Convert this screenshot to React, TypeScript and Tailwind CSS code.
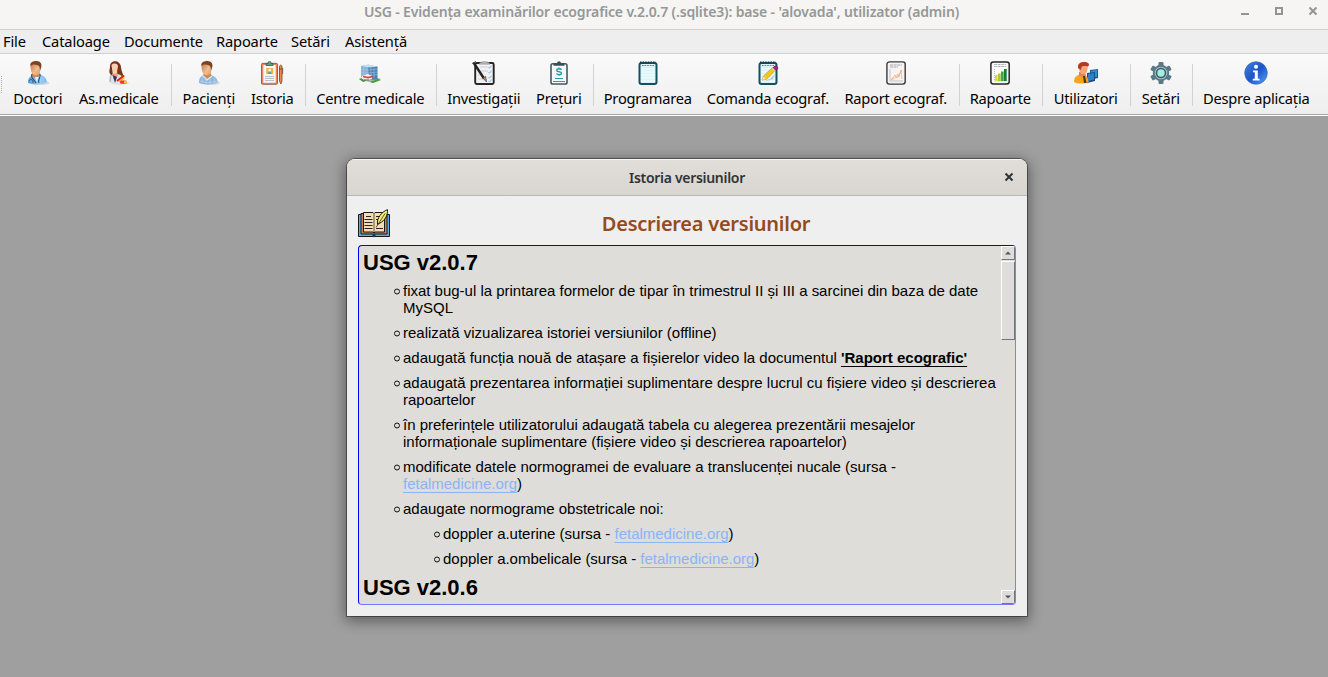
import type { ReactNode } from 'react';

function Svg({ children }: { children: ReactNode }) {
  return (
    <svg viewBox="0 0 24 24" className="block h-6 w-6">
      {children}
    </svg>
  );
}

const Doctor = () => (
  <Svg>
    <defs>
      <linearGradient id="skin" x1="0" x2="1" y1="0" y2="1">
        <stop offset="0" stopColor="#b87345" />
        <stop offset=".6" stopColor="#f3bd90" />
        <stop offset="1" stopColor="#dd9966" />
      </linearGradient>
      <linearGradient id="coat" x1="0" x2="1">
        <stop offset="0" stopColor="#4f9cdf" />
        <stop offset=".6" stopColor="#9ed0f8" />
        <stop offset="1" stopColor="#7fbcf0" />
      </linearGradient>
    </defs>
    <ellipse cx="14" cy="22" rx="9.500" ry="2" fill="#d5d8dc" />
    <path d="M2 22c0-5 2-7 6-8l4-1c5 1 8 3 9 8-4 3-15 3-19 1z" fill="url(#coat)" />
    <path d="M6 10h7l1 4-4 4-4-3z" fill="#cf8a58" />
    <path d="M4.500 4c1-3 9-4 9.500 0v7c-1 4-6 4-8 1-1-2-1.500-4-1.500-8z" fill="url(#skin)" />
    <path d="M4.500 5c-1-4 3-5 6-5 4 0 6 3 4.500 7l-1 3c0-4-1-6-3-6-2-.5-4-1-6.500 1z" fill="#7b4322" />
    <path d="M6 13c-2 4 2 5 4 9M14 13c1 4-3 6-1 9" fill="none" stroke="#27496a" strokeWidth="1.100" />
    <path d="M3 20c1-2 3-2 4 0v2" fill="none" stroke="#36536d" />
    <path d="M9 16l1.500 5 2-5z" fill="#e8f5ff" />
  </Svg>
);

const Nurse = () => (
  <Svg>
    <ellipse cx="13" cy="22" rx="9" ry="1.800" fill="#dcdcdc" />
    <path d="M3 5c0-6 10-7 11 1 0 4 2.500 7 2.500 10l-6.500 1-6-3C1 11 3 9 3 5z" fill="#76351d" />
    <path d="M2.500 15l8-2c5 1 6 4 6 8-5 3-12.500 2-14.500 0 0-3-.5-5 .5-6z" fill="#dfe2ea" />
    <path d="M6 10h4l1 5-3 2-3-3z" fill="#e7a278" />
    <path d="M4.500 4c2-2 5.500-2 6.500 1l-1 6c-1.500 3-4 2-4.500 0z" fill="#fbd0b0" />
    <path d="M5.500 14l2.500 8 2-6z" fill="#34335c" />
    <path d="M4 14l-1 7" stroke="#a4aabb" />
    <path d="M11 20c1-3 3-5 6-6l1 1.500-4 4.500z" fill="#f7c52b" />
    <path d="M10 20l7-5.500" stroke="#d92119" strokeWidth="1.700" />
    <path d="M12 20.500l5-3.500" stroke="#f5a52b" strokeWidth="1.500" />
    <rect x="13" y="19.500" width="7" height="3.300" rx="1.600" fill="#e83c2d" />
    <rect x="17" y="19.500" width="3" height="3.300" rx="1.500" fill="#f8c34c" />
  </Svg>
);

const Patient = () => (
  <Svg>
    <ellipse cx="14" cy="22" rx="9" ry="2" fill="#d5d8dc" />
    <path d="M2 22c0-6 2-7 6-8h6c5 2 6 4 7 7-4 3-15 3-19 1z" fill="#8fb6dc" />
    <path d="M5 17l1 5M9 18v5M13 17v6M17 17l1 5M3 20c5 2 12 2 17 0" stroke="#b8d3ec" strokeWidth=".8" fill="none" />
    <path d="M7 11h6l2 4-4 3-5-3z" fill="#cf8a58" />
    <path d="M4.500 4c1-3 9-4 9.500 0v7c-1 4-6 4-8 1-1-2-1.500-4-1.500-8z" fill="url(#skin)" />
    <path d="M4.500 5c-1-4 3-5 6-5 4 0 6 3 4.500 7l-1 3c0-4-1-6-3-6-2-.5-4-1-6.500 1z" fill="#7b4322" />
    <path d="M6 15l4 4 5-4" fill="none" stroke="#dcebf7" strokeWidth="1.300" />
  </Svg>
);

const History = () => (
  <Svg>
    <rect x="1.500" y="2.300" width="16" height="21" rx="1.300" fill="#ef8558" stroke="#654235" strokeWidth=".7" />
    <rect x="3.300" y="4" width="12.400" height="17.800" fill="#f4f5fa" />
    <path d="M6 4.500V2.500h2c0-3 3-3 3 0h2v2z" fill="#5ba184" stroke="#34594c" strokeWidth=".8" />
    <rect x="6.200" y="7" width="7" height="6" fill="#f5b53f" />
    <circle cx="9.700" cy="9" r="1.300" fill="#fff" />
    <path d="M7.700 13c0-3 4-3 4 0z" fill="#4eaaa0" />
    <path d="M5 15.500h9M5 17.500h9M5 19.500h9" stroke="#b2b9c4" strokeWidth=".9" />
    <path d="M19.500 6c0-2.500 2.500-2.500 2.500 0v14l-1.200 3-1.300-3z" fill="#ec8b4d" stroke="#72442f" strokeWidth=".8" />
    <path d="M19.500 8H22M22.700 7v6" stroke="#72442f" strokeWidth=".8" />
  </Svg>
);

const Hospital = () => (
  <Svg>
    <path d="M1 18l9-4 13 4-8 4z" fill="#a3b7a4" />
    <path d="M1 18l4-1 3 3-3 1zM12 21l8-3 3 1-8 3z" fill="#4b9b36" />
    <path d="M3 5l8-1.500v14L3 16z" fill="#86b2d3" />
    <path d="M10 4l9.500 1.500v13L11 19z" fill="#4a80ae" />
    <path d="M3 5l7-1.500 9.500 2-8 1z" fill="#c8e0f0" />
    <path d="M3 8.500l7.500.5 9-1M3 11.500l7.500.5 9-1M3 14l7.500.5 9-1M13 6.500v12M16 6.500v11M5.500 5.500v10M8.200 5.500v11" stroke="#9ec6e2" strokeWidth=".6" fill="none" />
    <path d="M4 15l6-2 4 2v3l-5 1.500L4 18z" fill="#f1f1f5" />
    <path d="M5 15.500l5 1.200 5-1.200" stroke="#e0442e" strokeWidth="1.700" fill="none" />
    <path d="M6 19h5" stroke="#4d5a69" />
  </Svg>
);

const Investigation = () => (
  <Svg>
    <rect x="3.200" y="2" width="18.500" height="21" rx="1.500" fill="#eff1f5" stroke="#272525" strokeWidth="1.900" />
    <path d="M7 3c1-3 10-3 11 0z" fill="#c9cacd" stroke="#77777a" strokeWidth=".7" />
    <path d="M8 6h8M9 10h7M6 14h4M6 18h9" stroke="#c6c9d0" strokeWidth=".8" />
    <path d="M16.500 6l1 1.200 2-2.500M16.500 11l1 1.200 2-2.500M16.500 16l1 1.200 2-2.500M16.500 20l1 1 2-2.500" stroke="#84abe0" strokeWidth=".9" fill="none" />
    <path d="M1.500 1.500l10.500 16" stroke="#252322" strokeWidth="2.400" />
    <path d="M11 17l3.500 4-.8-5.500z" fill="#ba9558" stroke="#363023" strokeWidth=".6" />
    <path d="M0 2.500l4-2" stroke="#555" strokeWidth="1" />
  </Svg>
);

const Prices = () => (
  <Svg>
    <rect x="4" y="2.700" width="16" height="20.300" rx="1.800" fill="#f8f9f9" stroke="#405a65" strokeWidth="1.600" />
    <path d="M6.500 4.800V2.500h3.500c0-3 4-3 4 0h3.500v2.300z" fill="#34505a" />
    <path d="M14.500 8.800c-.8-1.400-4.700-1.500-4.800.4 0 2.200 4.800.9 4.800 3.100-.1 1.900-4.200 1.800-5 .2" fill="none" stroke="#2b9ba6" strokeWidth="1.500" />
    <path d="M12 6.500v1.300M12 13.700v.8" stroke="#2b9ba6" strokeWidth="1.200" />
    <path d="M8 17.500h8M6 20.500h12" stroke="#2b9ba6" strokeWidth="1.200" />
  </Svg>
);

const NotebookBase = () => (
  <>
    <rect x="3.500" y="2" width="17" height="21" rx="2" fill="#dcf2f6" stroke="#135062" strokeWidth="2" />
    <path d="M4 1.500h16" stroke="#173c4a" strokeWidth="2" strokeDasharray="1.600 1" />
    <path d="M6 4.500h12.500" stroke="#5a7075" strokeWidth=".9" strokeDasharray="1.600 1" />
    <path d="M5 8h14M5 11h14M5 14h14M5 17h14M5 20h14" stroke="#e9fbfd" strokeWidth="1.500" />
  </>
);

const Notebook = () => (
  <Svg>
    <NotebookBase />
  </Svg>
);

const Order = () => (
  <Svg>
    <NotebookBase />
    <path d="M8 21l9-3 2-5-4 4z" fill="#b8c9cc" />
    <path d="M6 19l1.500-4L17 6l2.800 2.800-9.300 9.500z" fill="#f8ca18" stroke="#b08720" strokeWidth=".6" />
    <path d="M6 19l1.500-3.500 2.500 2.500z" fill="#f8e4b8" />
    <path d="M16.300 6.500l2.900 2.900" stroke="#d9dde0" strokeWidth="1.400" />
    <path d="M17.700 6c1.300-2 5-.5 3.800 2l-2 1-2-2z" fill="#c41e76" stroke="#671345" strokeWidth=".8" />
  </Svg>
);

const ReportChart = () => (
  <Svg>
    <rect x="2.900" y=".9" width="18.300" height="22.200" rx="2.500" fill="#f5f3f4" stroke="#3b3739" strokeWidth="1.400" />
    <path d="M6 4h12M6 6h8" stroke="#a5a5aa" strokeWidth="1" strokeDasharray="3 .6" />
    <path d="M6 8v12h13" stroke="#a8b1bd" strokeWidth=".7" fill="none" />
    <path d="M7 19l4-5 2 3 5-8" fill="none" stroke="#f8b468" strokeWidth=".9" />
    <path d="M7 19l4-2 3-4 1 3 2-7 1 9" fill="none" stroke="#f1a097" strokeWidth=".7" />
  </Svg>
);

const Reports = () => (
  <Svg>
    <rect x="2.900" y=".9" width="18.300" height="22.200" rx="2.500" fill="#fbfbfb" stroke="#272727" strokeWidth="1.500" />
    <path d="M6 3.500h12M6 5.500h12" stroke="#aaaaab" strokeWidth=".8" strokeDasharray="3 .6" />
    <path d="M6.500 8v12h12.500" stroke="#8c9297" strokeWidth=".6" strokeDasharray="1 1" fill="none" />
    <path d="M7 14h2.700v6H7z" fill="#e0df2c" />
    <path d="M10 12.500h2.700V20H10z" fill="#a3cd36" />
    <path d="M13 10.500h2.700V20H13z" fill="#3aa845" />
    <path d="M16 8h2.700v12H16z" fill="#168136" />
  </Svg>
);

const Users = () => (
  <Svg>
    <path d="M16 9l8-1v9l-8 2z" fill="#1c5b98" />
    <path d="M17 10l6-.9v6.500l-6 1.400z" fill="#3390d4" />
    <path d="M13 12l8-1v9l-8 2z" fill="#174f86" />
    <path d="M14 13l6-.9v6.500L14 20z" fill="#327fc5" />
    <path d="M0 21c0-5 3-7 7-8 4 0 7.500 3 7.500 8-4 2-11 2-14.500 0z" fill="#f8a619" />
    <path d="M5 11h6l1 4-2 2-5-2z" fill="#e88450" />
    <path d="M9 15l1 7h2.500L11 15z" fill="#4e3522" />
    <path d="M4.500 4c1-3 9.500-3 9.500 1l-1 6c-2 3-6 3-7 0-1-2-1.500-4-1.500-7z" fill="#f4a67b" />
    <path d="M4 7C3.500 2 7 1 10 1c4 0 6 2 4.500 4-2 1-5-1-7 1L7 9z" fill="#b23c20" />
  </Svg>
);

const Gear = () => (
  <Svg>
    <g fill="#587985">
      <rect x="9.500" y="1" width="5" height="22" rx="1" />
      <rect x="9.500" y="1" width="5" height="22" rx="1" transform="rotate(60 12 12)" />
      <rect x="9.500" y="1" width="5" height="22" rx="1" transform="rotate(120 12 12)" />
      <circle cx="12" cy="12" r="8.200" />
    </g>
    <circle cx="12" cy="12" r="5.800" fill="#3d5f6c" stroke="#a4b9c0" strokeWidth="1.100" />
    <circle cx="12" cy="12" r="3.700" fill="#a2efe2" />
  </Svg>
);

const Info = () => (
  <Svg>
    <defs>
      <linearGradient id="info" x1="0" x2="1" y1="0" y2="1">
        <stop offset="0" stopColor="#4a82df" />
        <stop offset=".5" stopColor="#1c54c9" />
        <stop offset="1" stopColor="#52a5f5" />
      </linearGradient>
    </defs>
    <circle cx="12" cy="12" r="11.300" fill="url(#info)" stroke="#3868b8" strokeWidth=".7" />
    <circle cx="12" cy="5.800" r="2" fill="#fff" />
    <path d="M9 9.500h4.800v8.300h1.800v1.700H8.800v-1.700h2v-6.500H9z" fill="#fff" />
  </Svg>
);

const Book = () => (
  <svg viewBox="0 0 32 29" className="block h-[29px] w-8">
    <path d="M.5 5.500h31v22H.5z" fill="#55aee0" stroke="#191919" strokeWidth="1" />
    <path d="M3 4.500h26v20.500H3z" fill="#c98550" stroke="#191919" strokeWidth="1" />
    <path d="M5.500 3.500h9.500l1 1 1-1h9.500V23H17l-1 1-1-1H5.500z" fill="#f3dcb6" stroke="#191919" strokeWidth="1" />
    <path d="M16 5v18" stroke="#8d7a62" strokeWidth="1.400" />
    <path d="M8 7.500h5M6.500 10.500h8M6.500 13.500h8M6.500 16.500h8M6.500 19.500h8M18 7.500h4M18 10.500h2M18 19.500h7" stroke="#292420" strokeWidth="1" />
    <path d="M19.500 15.500C18.500 9 24 2.500 29.500.7c.4 5-2.500 11-7.500 13.300z" fill="#f6ed72" stroke="#171710" strokeWidth="1" />
    <path d="M18 18.500L27 4.500" stroke="#34321a" strokeWidth=".8" />
    <path d="M14.500 25h3v2l-1.500 1.500-1.500-1.500z" fill="#173e51" />
  </svg>
);

type Tool = { label: string; width: string; icon: ReactNode; after?: string };

const tools: Tool[] = [
  { label: 'Doctori', width: 'w-[65px]', icon: <Doctor /> },
  { label: 'As.medicale', width: 'w-[97px]', icon: <Nurse />, after: 'w-[7px]' },
  { label: 'Pacienți', width: 'w-[69px]', icon: <Patient /> },
  { label: 'Istoria', width: 'w-[58px]', icon: <History />, after: 'w-[7px]' },
  { label: 'Centre medicale', width: 'w-[124px]', icon: <Hospital />, after: 'w-[7px]' },
  { label: 'Investigații', width: 'w-[89px]', icon: <Investigation /> },
  { label: 'Prețuri', width: 'w-[61px]', icon: <Prices />, after: 'w-[7px]' },
  { label: 'Programarea', width: 'w-[103px]', icon: <Notebook /> },
  { label: 'Comanda ecograf.', width: 'w-[137px]', icon: <Order /> },
  { label: 'Raport ecograf.', width: 'w-[119px]', icon: <ReportChart />, after: 'w-[7px]' },
  { label: 'Rapoarte', width: 'w-[76px]', icon: <Reports />, after: 'w-[7px]' },
  { label: 'Utilizatori', width: 'w-[81px]', icon: <Users />, after: 'w-[7px]' },
  { label: 'Setări', width: 'w-[55px]', icon: <Gear />, after: 'w-[7px]' },
  { label: 'Despre aplicația', width: 'w-[122px]', icon: <Info /> },
];

const menus = [
  { label: 'File', width: 'w-[39px]' },
  { label: 'Cataloage', width: 'w-[82px]' },
  { label: 'Documente', width: 'w-[92px]' },
  { label: 'Rapoarte', width: 'w-[75px]' },
  { label: 'Setări', width: 'w-[54px]' },
  { label: 'Asistență', width: 'w-[70px]' },
];

function Item({ children }: { children: ReactNode }) {
  return (
    <li className="mb-2 flex">
      <svg viewBox="0 0 10 17" className="-ml-2.5 h-[17px] w-2.5 shrink-0">
        <circle cx="4" cy="9.500" r="2.500" fill="none" stroke="#111" strokeWidth="1" />
      </svg>
      <div>{children}</div>
    </li>
  );
}

const Link = () => (
  <a className="text-[#8ab4f8] underline decoration-1 underline-offset-3">fetalmedicine.org</a>
);

function ScrollButton({ down }: { down?: boolean }) {
  return (
    <div className="flex h-[14px] w-[14px] shrink-0 items-center justify-center border border-t-white border-r-[#77767a] border-b-[#77767a] border-l-white bg-[#deddd9]">
      <svg viewBox="0 0 6 4" className="h-1 w-1.5">
        <path d={down ? 'M0 .5h6l-3 3z' : 'M0 3.500h6l-3-3z'} fill="#555" />
      </svg>
    </div>
  );
}

export default function App() {
  return (
    <div className="flex h-[677px] w-[1328px] flex-col overflow-hidden bg-[#9f9f9f] font-['Noto_Sans',sans-serif] text-black">
      <header className="relative flex h-[29px] shrink-0 items-start justify-center bg-[#f6f5f3]">
        <h1 className="mt-[2px] -ml-[5px] text-[14px] leading-[19px] font-semibold tracking-[-0.15px] whitespace-nowrap text-[#949897]">
          USG - Evidența examinărilor ecografice v.2.0.7 (.sqlite3): base - 'alovada', utilizator (admin)
        </h1>
        <svg viewBox="0 0 80 12" className="absolute top-[5px] right-[8px] h-3 w-20">
          <path d="M1 9h8" stroke="#929595" strokeWidth="2" />
          <path d="M36 3h6v6h-6z" fill="none" stroke="#929595" strokeWidth="2" />
          <path d="M69.500 2.500l7 7M76.500 2.500l-7 7" stroke="#929595" strokeWidth="2" />
        </svg>
      </header>
      <nav className="flex h-[25px] shrink-0 items-center border-t border-b border-t-[#d2d1cd] border-b-[#d0d0d0] bg-[#eeeeee] pb-0.5 pl-[3px] text-[14.67px] leading-5 tracking-[-0.15px]">
        {menus.map((m) => (
          <div key={m.label} className={`${m.width} shrink-0 whitespace-nowrap`}>
            {m.label}
          </div>
        ))}
      </nav>
      <div className="flex h-[62px] shrink-0 border-b border-white bg-[#a8a8a8] pb-px">
        <div className="flex w-full bg-linear-to-b from-[#fafafa] to-[#eeeeee]">
          <div className="mt-[22px] mr-px ml-px h-[17px] w-1 shrink-0 border-l border-dotted border-[#aaa]" />
          {tools.map((t) => (
            <div key={t.label} className="flex shrink-0">
              <button className={`${t.width} flex flex-col items-center pt-[7px] pr-[1.5px]`}>
                <span>{t.icon}</span>
                <span className="mt-[3px] text-[14.67px] leading-5 tracking-[-0.24px] whitespace-nowrap">{t.label}</span>
              </button>
              {t.after && (
                <div className={`${t.after} flex justify-center`}>
                  <div className="mt-2.5 h-[42px] w-px bg-[#d2d2d2]" />
                </div>
              )}
            </div>
          ))}
        </div>
      </div>
      <main className="flex grow justify-center pt-[43px] pl-[46px]">
        <section className="flex h-[457px] w-[680px] flex-col overflow-hidden rounded-t-[8px] bg-[#efefef] shadow-[0_0_0_1px_rgba(0,0,0,0.4),0_3px_14px_2px_rgba(0,0,0,0.42)]">
          <div className="relative flex h-[37px] shrink-0 items-center justify-center border-t border-b border-t-[#f7f6f5] border-b-[#b8b8ae] bg-linear-to-b from-[#e1deda] to-[#d9d5d0]">
            <h2 className="text-[14px] leading-5 font-semibold tracking-[-0.3px] text-[#2e3436]">Istoria versiunilor</h2>
            <svg viewBox="0 0 10 10" className="absolute top-[12px] right-[13px] h-2.5 w-2.5">
              <path d="M1.500 1.500l7 7M8.500 1.500l-7 7" stroke="#2e3436" strokeWidth="2" />
            </svg>
          </div>
          <div className="flex h-[49px] shrink-0 pl-[11px]">
            <div className="mt-[13px]">
              <Book />
            </div>
            <h3 className="mt-[14px] grow pr-[5px] text-center text-[20px] leading-7 font-semibold tracking-[-0.25px] text-[#954a20]">
              Descrierea versiunilor
            </h3>
          </div>
          <div className="ml-[11px] flex h-[360px] w-[658px] shrink-0 overflow-hidden rounded-[4px] border border-t-[#0000ff] border-r-[#8080f0] border-b-[#7878ff] border-l-[#0000ff] bg-[#deddd9]">
            <div className="w-[642px] shrink-0 pt-1 pl-1 font-['Liberation_Sans',Arial,sans-serif] text-[15px] leading-[17px] tracking-[-0.01px]">
              <h4 className="text-[22px] leading-[26px] font-bold">USG v2.0.7</h4>
              <ul className="mt-1.5 pl-10">
                <Item>
                  fixat bug-ul la printarea formelor de tipar în trimestrul II și III a sarcinei din baza de date
                  <br />
                  MySQL
                </Item>
                <Item>realizată vizualizarea istoriei versiunilor (offline)</Item>
                <Item>
                  adaugată funcția nouă de atașare a fișierelor video la documentul{' '}
                  <b className="underline decoration-1 underline-offset-3">'Raport ecografic'</b>
                </Item>
                <Item>
                  <span className="whitespace-nowrap">
                    adaugată prezentarea informației suplimentare despre lucrul cu fișiere video și descrierea
                  </span>
                  <br />
                  rapoartelor
                </Item>
                <Item>
                  în preferințele utilizatorului adaugată tabela cu alegerea prezentării mesajelor
                  <br />
                  informaționale suplimentare (fișiere video și descrierea rapoartelor)
                </Item>
                <Item>
                  modificate datele normogramei de evaluare a translucenței nucale (sursa -
                  <br />
                  <Link />)
                </Item>
                <Item>adaugate normograme obstetricale noi:</Item>
                <li>
                  <ul className="pl-10">
                    <Item>
                      doppler a.uterine (sursa - <Link />)
                    </Item>
                    <Item>
                      doppler a.ombelicale (sursa - <Link />)
                    </Item>
                  </ul>
                </li>
              </ul>
              <h4 className="text-[22px] leading-[26px] font-bold">USG v2.0.6</h4>
            </div>
            <div className="flex w-[14px] shrink-0 flex-col">
              <ScrollButton />
              <div className="mt-px h-[79px] shrink-0 border border-t-white border-r-[#77767a] border-b-[#77767a] border-l-white" />
              <div className="grow" />
              <ScrollButton down />
            </div>
          </div>
        </section>
      </main>
    </div>
  );
}
